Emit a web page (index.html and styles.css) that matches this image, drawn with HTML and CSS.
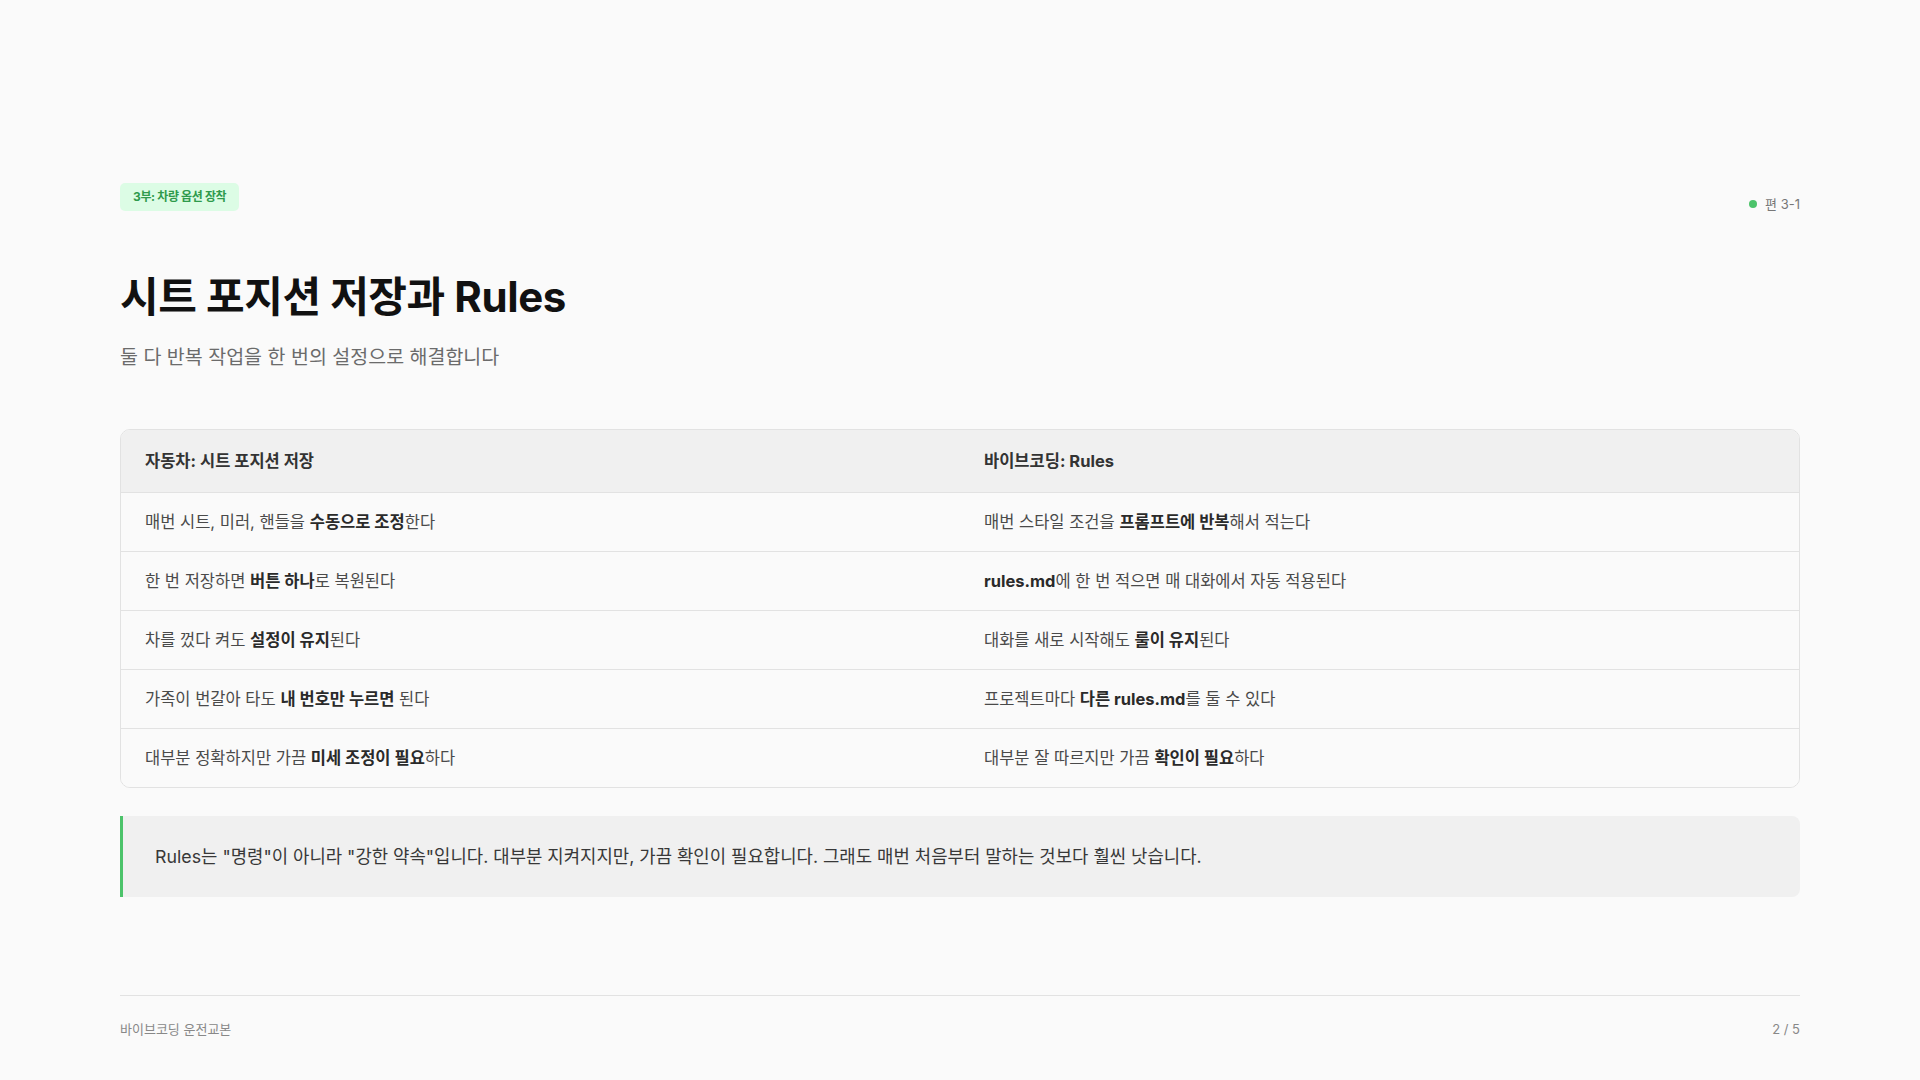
FILE: index.html
```html
<!DOCTYPE html>
<html lang="ko">
<head>
<meta charset="utf-8">
<title>시트 포지션 저장과 Rules</title>
<link rel="stylesheet" href="styles.css">
</head>
<body>
<div class="slide">
  <header class="top">
    <span class="badge">3부: 차량 옵션 장착</span>
    <span class="meta"><span class="dot"></span>편 3-1</span>
  </header>

  <h1 class="title">시트 포지션 저장과 Rules</h1>
  <p class="subtitle">둘 다 반복 작업을 한 번의 설정으로 해결합니다</p>

  <div class="table-wrap">
    <table class="compare">
      <thead>
        <tr><th>자동차: 시트 포지션 저장</th><th>바이브코딩: Rules</th></tr>
      </thead>
      <tbody>
        <tr><td>매번 시트, 미러, 핸들을 <b>수동으로 조정</b>한다</td><td>매번 스타일 조건을 <b>프롬프트에 반복</b>해서 적는다</td></tr>
        <tr><td>한 번 저장하면 <b>버튼 하나</b>로 복원된다</td><td><b>rules.md</b>에 한 번 적으면 매 대화에서 자동 적용된다</td></tr>
        <tr><td>차를 껐다 켜도 <b>설정이 유지</b>된다</td><td>대화를 새로 시작해도 <b>룰이 유지</b>된다</td></tr>
        <tr><td>가족이 번갈아 타도 <b>내 번호만 누르면</b> 된다</td><td>프로젝트마다 <b>다른 rules.md</b>를 둘 수 있다</td></tr>
        <tr><td>대부분 정확하지만 가끔 <b>미세 조정이 필요</b>하다</td><td>대부분 잘 따르지만 가끔 <b>확인이 필요</b>하다</td></tr>
      </tbody>
    </table>
  </div>

  <div class="callout">Rules는 "명령"이 아니라 "강한 약속"입니다. 대부분 지켜지지만, 가끔 확인이 필요합니다. 그래도 매번 처음부터 말하는 것보다 훨씬 낫습니다.</div>

  <footer class="foot">
    <span>바이브코딩 운전교본</span>
    <span>2 / 5</span>
  </footer>
</div>
</body>
</html>
```

FILE: styles.css
```css
* { box-sizing: border-box; }
html, body { margin: 0; padding: 0; }
body {
  background: #fafafa;
  font-family: "Inter", "Noto Sans CJK KR", sans-serif;
  color: #222;
}
.slide {
  width: 1920px;
  height: 1080px;
  padding: 183px 120px 0;
  display: flex;
  flex-direction: column;
}
.top {
  display: flex;
  justify-content: space-between;
  align-items: flex-end;
}
.badge {
  display: inline-block;
  background: #dcfce5;
  color: #2f9a4c;
  font-size: 12px;
  font-weight: 700;
  line-height: 16px;
  padding: 6px 13px;
  border-radius: 5px;
  letter-spacing: -0.03em;
}
.meta {
  display: flex;
  align-items: center;
  gap: 8px;
  font-size: 13px;
  line-height: 14px;
  color: #777;
}
.dot {
  width: 8px;
  height: 8px;
  border-radius: 50%;
  background: #4cc36a;
}
.title {
  margin: 62px 0 0;
  font-size: 42px;
  line-height: 48px;
  font-weight: 700;
  letter-spacing: -0.01em;
  color: #111;
}
.subtitle {
  margin: 23px 0 0;
  font-size: 19.5px;
  line-height: 27px;
  color: #6b6b6b;
}
.table-wrap {
  margin-top: 58px;
  border: 1px solid #e2e2e2;
  border-radius: 10px;
  overflow: hidden;
}
.compare {
  width: 100%;
  border-collapse: collapse;
  table-layout: fixed;
  font-size: 16.5px;
  line-height: 18px;
}
.compare th {
  text-align: left;
  background: #f0f0f0;
  color: #333;
  font-weight: 700;
  padding: 22px 24px;
  border-bottom: 1px solid #e2e2e2;
}
.compare td {
  padding: 20px 24px;
  color: #4a4a4a;
  background: #fafafa;
  border-bottom: 1px solid #e2e2e2;
}
.compare tbody tr:last-child td { border-bottom: none; }
.compare b { font-weight: 700; color: #2a2a2a; }
.callout {
  margin-top: 28px;
  background: #f0f0f0;
  border-left: 3px solid #4cc36a;
  border-radius: 0 8px 8px 0;
  padding: 30px 32px;
  font-size: 17.8px;
  line-height: 21px;
  color: #383838;
}
.foot {
  margin-top: 98px;
  border-top: 1px solid #e2e2e2;
  padding-top: 25px;
  display: flex;
  justify-content: space-between;
  font-size: 13px;
  line-height: 16px;
  color: #888;
}
```
